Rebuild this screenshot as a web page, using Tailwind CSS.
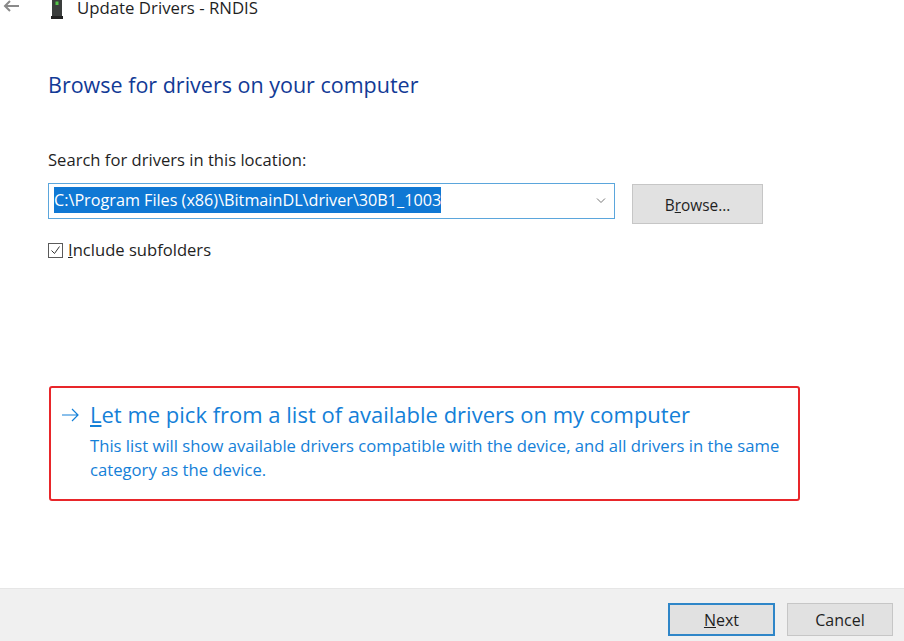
<!DOCTYPE html>
<html><head><meta charset="utf-8"><script src="https://cdn.jsdelivr.net/npm/@tailwindcss/browser@4"></script></head>
<body class="m-0 bg-white">
<div class="w-[904px] h-[641px] overflow-hidden flex flex-col bg-white text-[#1a1a1a] font-['Open_Sans','Noto_Sans',sans-serif]">
  <header class="h-[19px] flex items-start">
    <svg class="ml-[3px] w-[16px] h-[12px]" viewBox="0 0 16 12" fill="none" stroke="#8a8a8a" stroke-width="2"><path d="M16 6H2M7 1 2 6l5 5"/></svg>
    <svg class="ml-[31px] w-[15px] h-[19px]" viewBox="0 0 15 19"><rect x="2" y="0" width="10" height="16" fill="#3a3d3c"/><rect x="5.5" y="1.5" width="3" height="3.5" fill="#52c447"/><rect x="1" y="16" width="12" height="3" fill="#222"/></svg>
    <span class="ml-[12px] text-[16.8px] leading-[16px] text-[#1f1f1f] whitespace-nowrap">Update Drivers - RNDIS</span>
  </header>
  <main class="flex-1 flex flex-col pl-[48px]">
    <h1 class="mt-[51px] text-[21.5px] leading-[30px] font-normal text-[#123a96] whitespace-nowrap">Browse for drivers on your computer</h1>
    <label class="mt-[49px] text-[16.6px] leading-[22px] text-[#1f1f1f] whitespace-nowrap">Search for drivers in this location:</label>
    <div class="mt-[12px] flex items-start">
      <div class="w-[567px] h-[36px] border border-[#5ba6dc] flex items-center justify-between pl-[5px] pr-[8px]">
        <span class="bg-[#0f78d4] text-white text-[16.2px] leading-[26px] h-[26px] mb-[2px] whitespace-nowrap">C:\Program Files (x86)\BitmainDL\driver\30B1_1003</span>
        <svg class="w-[10px] h-[6px]" viewBox="0 0 10 6" fill="none" stroke="#777" stroke-width="1"><path d="m1 .5 4 4 4-4"/></svg>
      </div>
      <button class="ml-[17px] mt-[1px] w-[131px] h-[40px] pt-[4px] bg-[#e1e1e1] border border-[#c6c6c6] text-[15.4px] text-[#1f1f1f]">B<u>r</u>owse...</button>
    </div>
    <div class="mt-[14px] flex items-center h-[24px]">
      <span class="w-[15px] h-[15px] border border-[#5a5a5a] flex items-center justify-center">
        <svg class="w-[11px] h-[11px]" viewBox="0 0 11 11" fill="none" stroke="#333" stroke-width="1"><path d="m1.5 5.5 3 3 5-7"/></svg>
      </span>
      <span class="ml-[5px] text-[16.6px] leading-[22px] text-[#1f1f1f] whitespace-nowrap"><u>I</u>nclude subfolders</span>
    </div>
    <section class="mt-[124px] ml-[1px] w-[751px] h-[115px] border-2 border-[#e8262a] rounded-[3px] flex items-start text-[#1480d8]">
      <svg class="mt-[20px] ml-[10px] w-[19px] h-[14px] shrink-0" viewBox="0 0 19 14" fill="none" stroke="#1480d8" stroke-width="1.2"><path d="M1 7h16M11 1l6 6-6 6"/></svg>
      <div class="ml-[10px] flex flex-col">
        <span class="mt-[11px] text-[22px] leading-[30px] whitespace-nowrap"><u>L</u>et me pick from a list of available drivers on my computer</span>
        <p class="mt-[5px] w-[700px] text-[16.66px] leading-[24px]">This list will show available drivers compatible with the device, and all drivers in the same category as the device.</p>
      </div>
    </section>
  </main>
  <footer class="h-[53px] bg-[#f0f0f0] border-t border-[#e6e6e6] flex justify-end gap-[12px] pr-[11px] pt-[14px]">
    <button class="w-[107px] h-[33px] bg-[#e1e1e1] border-2 border-[#2f86c8] text-[16px] text-[#1f1f1f]"><u>N</u>ext</button>
    <button class="w-[106px] h-[33px] bg-[#e1e1e1] border border-[#c6c6c6] text-[16px] text-[#1f1f1f]">Cancel</button>
  </footer>
</div>
</body></html>
